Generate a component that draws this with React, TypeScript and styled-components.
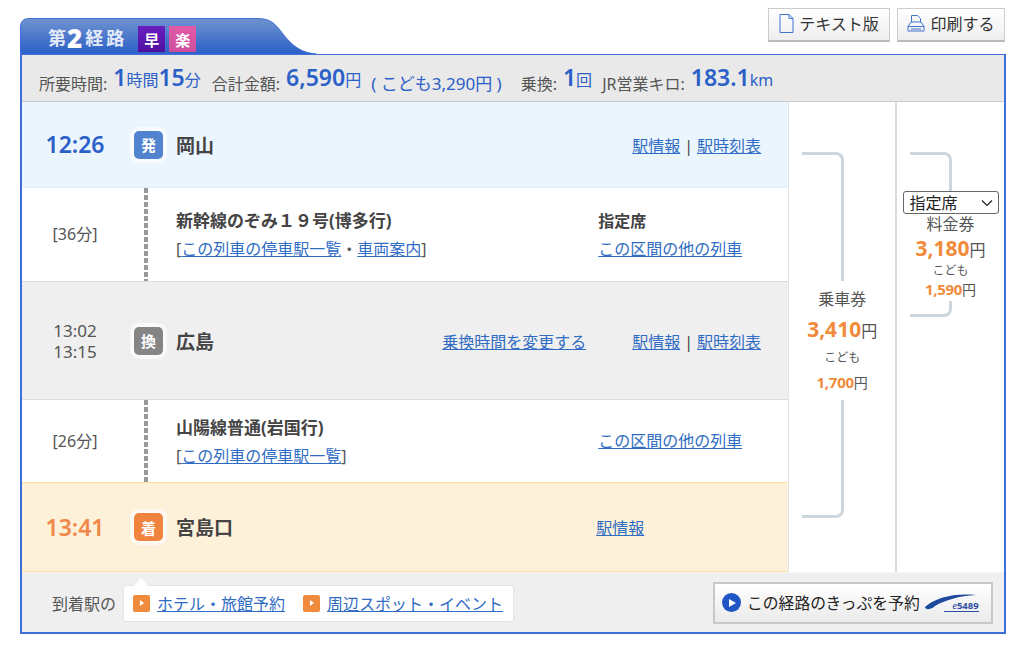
import styled, { createGlobalStyle } from 'styled-components'

const GlobalStyle = createGlobalStyle`
  html, body {
    margin: 0;
    background: #fff;
  }
  body {
    font-family: "Noto Sans", "Noto Sans CJK JP", sans-serif;
    color: #444;
  }
  a {
    color: #2f6cc4;
    text-decoration: underline;
  }
`

const Page = styled.div`
  width: 986px;
  padding: 8px 18px 0 20px;
`

const TopBar = styled.div`
  display: flex;
  justify-content: space-between;
  align-items: flex-start;
  height: 46px;
`

const Tab = styled.div`
  position: relative;
  isolation: isolate;
  width: 296px;
  height: 36px;
  margin-top: 10px;
  display: flex;
  align-items: flex-end;
  gap: 11px;
  padding: 0 0 2px 28px;
  box-sizing: border-box;
  color: #e4ebf8;
  font-size: 18px;
  font-weight: 700;
  letter-spacing: 3px;
  svg {
    position: absolute;
    left: 0;
    top: 0;
    z-index: -1;
  }
  b {
    font-size: 26px;
    letter-spacing: 0;
    color: #fff;
    margin: 0 3px 0 -2px;
  }
`

const TabTitle = styled.span`
  display: flex;
  align-items: center;
  height: 27px;
  line-height: 27px;
`

const Tags = styled.span`
  display: flex;
  gap: 4px;
`

const Tag = styled.span<{ $bg: string }>`
  width: 27px;
  height: 26px;
  display: flex;
  align-items: center;
  justify-content: center;
  background: ${p => p.$bg};
  color: #fff;
  font-size: 15px;
  letter-spacing: 0;
`

const Tools = styled.div`
  display: flex;
  gap: 7px;
  margin-right: 1px;
`

const ToolButton = styled.button<{ $w: number }>`
  width: ${p => p.$w}px;
  height: 34px;
  display: flex;
  align-items: center;
  justify-content: center;
  gap: 5px;
  padding: 0 0 3px;
  background: linear-gradient(#fff, #eee);
  border: 1px solid #ccc;
  border-bottom: 2px solid #bbb;
  font-family: inherit;
  font-size: 16px;
  color: #333;
`

const Panel = styled.div`
  border: 2px solid #3f6fd6;
  border-width: 1px 2px 2px 2px;
  width: 982px;
`

const Summary = styled.div`
  height: 47px;
  background: #e9e9e9;
  border-bottom: 1px solid #ccc;
  display: flex;
  align-items: baseline;
  padding: 11px 0 0 17px;
  box-sizing: border-box;
  font-size: 16px;
  color: #555;
  white-space: nowrap;
`

const Item = styled.span<{ $gap?: number }>`
  margin-right: ${p => p.$gap ?? 0}px;
`

const Value = styled.span`
  color: #2a60c8;
  font-size: 16px;
  margin-left: 6px;
  vertical-align: 4px;
  b {
    font-size: 23px;
    font-weight: 600;
    line-height: 1;
  }
`

const Note = styled.span`
  color: #2a60c8;
  font-size: 17px;
  margin-left: 6px;
`

const Body = styled.div`
  display: flex;
`

const Route = styled.div`
  width: 767px;
  border-right: 1px solid #dde3e6;
`

const Row = styled.div<{ $h: number; $bg?: string; $line?: string }>`
  height: ${p => p.$h}px;
  box-sizing: border-box;
  display: flex;
  align-items: center;
  background: ${p => p.$bg ?? '#fff'};
  border-bottom: 1px solid ${p => p.$line ?? '#ddd'};
`

const Time = styled.div<{ $color?: string; $bold?: boolean; $size?: number }>`
  width: 106px;
  flex: none;
  text-align: center;
  color: ${p => p.$color ?? '#555'};
  font-size: ${p => p.$size ?? (p.$bold ? 23 : 16)}px;
  font-weight: ${p => (p.$bold ? 600 : 400)};
  line-height: 21px;
`

const Mark = styled.div`
  width: 48px;
  flex: none;
  align-self: stretch;
  display: flex;
  align-items: center;
  padding-left: 6px;
  box-sizing: border-box;
`

const Badge = styled.span<{ $bg: string }>`
  width: 29px;
  height: 28px;
  display: flex;
  align-items: center;
  justify-content: center;
  background: ${p => p.$bg};
  color: #fff;
  border-radius: 5px;
  box-shadow: 0 0 0 1px rgba(255, 255, 255, .3), 0 0 0 4px rgba(255, 255, 255, .6);
  font-size: 15px;
  font-weight: 700;
`

const Dashes = styled.span`
  display: block;
  width: 4px;
  height: 100%;
  margin-left: 10px;
  background: repeating-linear-gradient(#999 0 5px, transparent 5px 7px);
`

const Main = styled.div`
  flex: 1;
  min-width: 0;
`

const Station = styled.div`
  font-size: 19px;
  font-weight: 700;
  color: #444;
`

const Train = styled.div`
  font-size: 17px;
  font-weight: 700;
  line-height: 22px;
  margin-bottom: 7px;
  color: #444;
`

const Sub = styled.div`
  font-size: 16px;
  line-height: 20px;
  color: #555;
`

const Change = styled.a`
  font-size: 16px;
  margin-right: 46px;
`

const Side = styled.div<{ $w: number }>`
  width: ${p => p.$w}px;
  flex: none;
  font-size: 16px;
`

const SeatName = styled.div`
  font-weight: 700;
  line-height: 22px;
  margin-bottom: 7px;
`

const Sep = styled.span`
  margin: 0 4px;
  color: #444;
`

const FareCol = styled.div<{ $w: number }>`
  width: ${p => p.$w}px;
  box-sizing: border-box;
  border-right: ${p => (p.$w === 108 ? '2px solid #d6dde0' : 'none')};
  display: flex;
  flex-direction: column;
  align-items: center;
  padding-top: 50px;
  text-align: center;
`

const BracketTop = styled.div<{ $h: number }>`
  width: 42px;
  height: ${p => p.$h}px;
  flex: none;
  align-self: flex-start;
  margin-left: 13px;
  box-sizing: border-box;
  border-top: 3px solid #cdd6da;
  border-right: 3px solid #cdd6da;
  border-top-right-radius: 8px;
`

const BracketBottom = styled(BracketTop)`
  border-top: 0;
  border-top-right-radius: 0;
  border-bottom: 3px solid #cdd6da;
  border-bottom-right-radius: 8px;
`

const FareName = styled.div`
  font-size: 16px;
  line-height: 20px;
  color: #555;
`

const Price = styled.div<{ $size: number }>`
  font-size: ${p => (p.$size > 16 ? 16 : 14)}px;
  line-height: ${p => (p.$size > 16 ? 26 : 22)}px;
  padding-top: ${p => (p.$size > 16 ? 3 : 0)}px;
  color: #555;
  b {
    color: #f18b3b;
    font-size: ${p => p.$size}px;
    line-height: 1;
    font-weight: 700;
    letter-spacing: ${p => (p.$size > 16 ? 0 : -0.3)}px;
  }
`

const Child = styled.div`
  font-size: 12px;
  line-height: 16px;
  color: #555;
`

const FareText = styled.div`
  height: 119px;
  flex: none;
  display: flex;
  flex-direction: column;
  gap: 6px;
  padding-top: 8px;
  box-sizing: border-box;
`

const SeatSelect = styled.select`
  appearance: none;
  width: 96px;
  height: 23px;
  flex: none;
  font-size: 16px;
  line-height: 20px;
  font-family: inherit;
  color: #222;
  background: #fff url("data:image/svg+xml,%3Csvg xmlns='http://www.w3.org/2000/svg' width='12' height='8'%3E%3Cpath d='M1 1.500l5 5 5-5' fill='none' stroke='%23222' stroke-width='1.200'/%3E%3C/svg%3E") no-repeat right 5px center;
  border: 1px solid #666;
  border-radius: 3px;
  padding: 0 0 0 6px;
`

const Footer = styled.div`
  height: 60px;
  background: #efefef;
  border-top: 1px solid #f5f5f5;
  box-sizing: border-box;
  display: flex;
  align-items: center;
  padding-left: 30px;
  font-size: 16px;
  color: #555;
`

const Balloon = styled.div`
  position: relative;
  display: flex;
  align-items: center;
  width: 391px;
  height: 37px;
  margin: 1px 0 0 7px;
  padding-left: 9px;
  box-sizing: border-box;
  background: #fff;
  border: 1px solid #e4e4e4;
  border-radius: 3px;
  gap: 7px;
  &::before {
    content: '';
    position: absolute;
    left: 10px;
    top: -8px;
    border: 7px solid transparent;
    border-top: 0;
    border-bottom: 8px solid #fff;
  }
`

const LinkIcon = styled.span`
  width: 17px;
  height: 17px;
  border-radius: 2px;
  background: #f08a3c;
  display: flex;
  align-items: center;
  justify-content: center;
  flex: none;
  &::after {
    content: '';
    border-left: 4px solid #fff;
    border-top: 3px solid transparent;
    border-bottom: 3px solid transparent;
  }
`

const BalloonLink = styled.a`
  font-size: 16px;
  margin-right: 11px;
  white-space: nowrap;
`

const Reserve = styled.button`
  width: 280px;
  height: 42px;
  margin-left: 199px;
  display: flex;
  align-items: center;
  padding: 0 0 0 7px;
  box-sizing: border-box;
  background: linear-gradient(#fff, #eaeaea);
  border: 2px solid #c8c8c8;
  font-family: inherit;
  font-size: 15.8px;
  color: #222;
  white-space: nowrap;
`

const PlayIcon = styled.span`
  width: 19px;
  height: 19px;
  border-radius: 50%;
  background: #1f56c4;
  display: flex;
  align-items: center;
  justify-content: center;
  flex: none;
  margin-right: 6px;
  &::after {
    content: '';
    margin-left: 2px;
    border-left: 7px solid #fff;
    border-top: 4px solid transparent;
    border-bottom: 4px solid transparent;
  }
`

const Logo = styled.span`
  position: relative;
  width: 54px;
  height: 20px;
  margin-left: 5px;
  flex: none;
  svg {
    display: block;
  }
  i {
    position: absolute;
    right: 0;
    bottom: 1px;
    font-size: 9.5px;
    font-weight: 700;
    font-style: normal;
    line-height: 10px;
    color: #2c4ea0;
    border-bottom: 1px solid #2c4ea0;
    padding-left: 8px;
  }
  em {
    font-weight: 400;
  }
`

const FileIcon = () => (
  <svg width="15" height="19" viewBox="0 0 15 19" fill="none" stroke="#3f74d0" strokeWidth="1">
    <path d="M1 .5h9l4 4v14H1z" />
    <path d="M10 .5v4h4" />
  </svg>
)

const PrintIcon = () => (
  <svg width="18" height="18" viewBox="0 0 18 18" fill="none" stroke="#3f74d0" strokeWidth="1">
    <path d="M4.500 8V1.500h6l3 3V8" />
    <path d="M4 8h10l3 4.500v4.500H1v-4.500z" />
    <path d="M1 12.500h16M4 15h10" />
  </svg>
)

const SwooshLogo = () => (
  <svg width="54" height="20" viewBox="0 0 54 20">
    <path d="M0 14C10 5 28 0 51 2 34 3 20 7 10 13 6 17 0 17 0 14z" fill="#1d4a9e" />
  </svg>
)

const TabShape = () => (
  <svg width="296" height="36" viewBox="0 0 296 36">
    <defs>
      <linearGradient id="tab-fill" x1="0" y1="0" x2="0" y2="1">
        <stop offset="0" stopColor="#6f93cf" />
        <stop offset="1" stopColor="#2b5fc8" />
      </linearGradient>
    </defs>
    <path
      d="M.5 36V9Q.5 .5 9 .5H238C256 .5 258 12 270 24 278 32 286 35 296 36z"
      fill="url(#tab-fill)"
      stroke="#3f6fd6"
    />
  </svg>
)

export default function App() {
  return (
    <Page>
      <GlobalStyle />
      <TopBar>
        <Tab>
          <TabShape />
          <TabTitle>第<b>2</b>経路</TabTitle>
          <Tags>
            <Tag $bg="linear-gradient(#6a1fc0, #4f0fa0)">早</Tag>
            <Tag $bg="linear-gradient(#e05aa8, #cf4f9c)">楽</Tag>
          </Tags>
        </Tab>
        <Tools>
          <ToolButton $w={122}><FileIcon />テキスト版</ToolButton>
          <ToolButton $w={108}><PrintIcon />印刷する</ToolButton>
        </Tools>
      </TopBar>
      <Panel>
        <Summary>
          <Item $gap={11}>所要時間:<Value><b>1</b>時間<b>15</b>分</Value></Item>
          <Item $gap={4}>合計金額:<Value><b>6,590</b>円</Value></Item>
          <Item $gap={19}><Note>( こども3,290円 )</Note></Item>
          <Item $gap={10}>乗換:<Value><b>1</b>回</Value></Item>
          <Item>JR営業キロ:<Value><b>183.1</b>km</Value></Item>
        </Summary>
        <Body>
          <Route>
            <Row $h={86} $bg="#ebf5fe" $line="#e4eef6">
              <Time $bold $color="#2a60c8">12:26</Time>
              <Mark><Badge $bg="#5183cf">発</Badge></Mark>
              <Main><Station>岡山</Station></Main>
              <Side $w={156}>
                <a href="#a">駅情報</a><Sep>|</Sep><a href="#b">駅時刻表</a>
              </Side>
            </Row>
            <Row $h={94}>
              <Time>[36分]</Time>
              <Mark><Dashes /></Mark>
              <Main>
                <Train>新幹線のぞみ１９号(博多行)</Train>
                <Sub>[<a href="#c">この列車の停車駅一覧</a>・<a href="#d">車両案内</a>]</Sub>
              </Main>
              <Side $w={190}>
                <SeatName>指定席</SeatName>
                <Sub><a href="#e">この区間の他の列車</a></Sub>
              </Side>
            </Row>
            <Row $h={118} $bg="#efefef">
              <Time $size={17}>13:02<br />13:15</Time>
              <Mark><Badge $bg="#858585">換</Badge></Mark>
              <Main><Station>広島</Station></Main>
              <Change href="#f">乗換時間を変更する</Change>
              <Side $w={156}>
                <a href="#a">駅情報</a><Sep>|</Sep><a href="#b">駅時刻表</a>
              </Side>
            </Row>
            <Row $h={83} $line="#fbdf9f">
              <Time>[26分]</Time>
              <Mark><Dashes /></Mark>
              <Main>
                <Train>山陽線普通(岩国行)</Train>
                <Sub>[<a href="#c">この列車の停車駅一覧</a>]</Sub>
              </Main>
              <Side $w={190}>
                <Sub><a href="#e">この区間の他の列車</a></Sub>
              </Side>
            </Row>
            <Row $h={89} $bg="#fdf1da" $line="#fbdf9f">
              <Time $bold $color="#f0884a">13:41</Time>
              <Mark><Badge $bg="#f0843f">着</Badge></Mark>
              <Main><Station>宮島口</Station></Main>
              <Side $w={192}><a href="#a">駅情報</a></Side>
            </Row>
          </Route>
          <FareCol $w={108}>
            <BracketTop $h={129} />
            <FareText>
              <FareName>乗車券</FareName>
              <Price $size={21}><b>3,410</b>円</Price>
              <Child>こども</Child>
              <Price $size={15}><b>1,700</b>円</Price>
            </FareText>
            <BracketBottom $h={118} />
          </FareCol>
          <FareCol $w={107}>
            <BracketTop $h={39} />
            <SeatSelect defaultValue="指定席">
              <option>指定席</option>
              <option>自由席</option>
            </SeatSelect>
            <FareName>料金券</FareName>
            <Price $size={21}><b>3,180</b>円</Price>
            <Child>こども</Child>
            <Price $size={15}><b>1,590</b>円</Price>
            <BracketBottom $h={16} />
          </FareCol>
        </Body>
        <Footer>
          到着駅の
          <Balloon>
            <LinkIcon />
            <BalloonLink href="#h">ホテル・旅館予約</BalloonLink>
            <LinkIcon />
            <BalloonLink href="#i">周辺スポット・イベント</BalloonLink>
          </Balloon>
          <Reserve>
            <PlayIcon />
            この経路のきっぷを予約
            <Logo><SwooshLogo /><i><em>e</em>5489</i></Logo>
          </Reserve>
        </Footer>
      </Panel>
    </Page>
  )
}
